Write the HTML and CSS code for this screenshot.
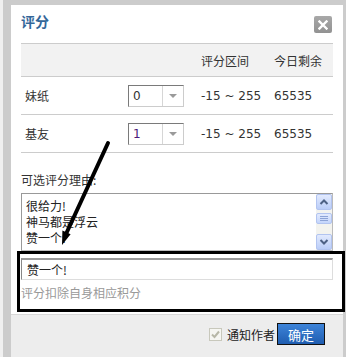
FILE: index.html
```html
<!DOCTYPE html>
<html>
<head>
<meta charset="utf-8">
<link rel="stylesheet" href="styles.css">
</head>
<body>
<div class="dialog">
  <div class="head">
    <h3 class="title">评分</h3>
    <span class="close"><svg width="10" height="10" viewBox="0 0 10 10"><path d="M1.5 1.5L8.5 8.5M8.5 1.5L1.5 8.5" stroke="#fff" stroke-width="2.4" stroke-linecap="square"/></svg></span>
  </div>
  <div class="table">
    <div class="row th"><span></span><span></span><span>评分区间</span><span>今日剩余</span></div>
    <div class="row"><span class="lbl">妹纸</span><span><span class="sel"><span class="val">0</span><span class="arr"><i class="tri"></i></span></span></span><span class="num">-15 ~ 255</span><span class="num">65535</span></div>
    <div class="row"><span class="lbl">基友</span><span><span class="sel"><span class="val v1">1</span><span class="arr"><i class="tri"></i></span></span></span><span class="num">-15 ~ 255</span><span class="num">65535</span></div>
  </div>
  <p class="reason-label">可选评分理由:</p>
  <div class="listbox">
    <ul class="items"><li>很给力!</li><li>神马都是浮云</li><li>赞一个!</li></ul>
    <div class="sb">
      <span class="sbtn"><svg width="10" height="8" viewBox="0 0 10 8"><path d="M1.5 6L5 2.5L8.5 6" fill="none" stroke="#4d6185" stroke-width="2"/></svg></span>
      <span class="thumb"><i></i><i></i><i></i></span>
      <span class="track"></span>
      <span class="sbtn"><svg width="10" height="8" viewBox="0 0 10 8"><path d="M1.5 2L5 5.5L8.5 2" fill="none" stroke="#4d6185" stroke-width="2"/></svg></span>
    </div>
  </div>
  <div class="input">赞一个!</div>
  <p class="hint">评分扣除自身相应积分</p>
  <div class="foot">
    <span class="chk"><svg width="11" height="11" viewBox="0 0 11 11"><path d="M2 5.5L4.5 8L9 2.5" fill="none" stroke="#b8b8a8" stroke-width="2"/></svg></span>
    <span class="notify">通知作者</span>
    <span class="btn">确定</span>
  </div>
</div>
<div class="mark-box"></div>
<svg class="mark-arrow" width="346" height="357" viewBox="0 0 346 357">
  <line x1="108" y1="143" x2="66" y2="234" stroke="#000" stroke-width="4" stroke-linecap="round"/>
  <polygon points="62,245 70.6,234.2 62.4,230.6" fill="#000"/>
</svg>
</body>
</html>
```

FILE: styles.css
```css
body {
  margin: 0;
  background: #f0f0f0;
  overflow: hidden;
  height: 357px;
  position: relative;
  font: 12px "Noto Sans CJK SC", "Liberation Sans", sans-serif;
  color: #333;
}
.dialog {
  margin: -3px 0 0 3px;
  border: 8px solid #ccc;
  width: 332px;
  background: #fff;
}
.head {
  height: 38px;
  padding: 0 11px 0 10px;
  display: flex;
  justify-content: space-between;
  align-items: flex-start;
}
.title {
  margin: 0;
  padding-top: 8px;
  font-size: 14px;
  line-height: 16px;
  font-weight: bold;
  color: #369;
}
.close {
  margin-top: 11px;
  width: 18px;
  height: 17px;
  border-radius: 2px;
  background: linear-gradient(#a8a8a8, #929292);
  display: flex;
  align-items: center;
  justify-content: center;
}
.table {
  margin: 0 10px;
}
.row {
  display: grid;
  grid-template-columns: 107px 73px 73px 1fr;
  align-items: center;
  height: 37px;
  border-bottom: 1px solid #ccc;
}
.row.th {
  height: 32px;
  border-top: 1px solid #ccc;
  background: #f2f2f2;
}
.lbl {
  padding-left: 4px;
}
.num {
  font-family: "DejaVu Sans", "Liberation Sans", sans-serif;
  font-size: 12px;
}
.sel {
  display: flex;
  width: 56px;
  height: 22px;
  box-sizing: border-box;
  border: 1px solid;
  border-color: #7a7a7a #ccc #ccc #7a7a7a;
}
.val {
  width: 33px;
  padding-left: 4px;
  box-sizing: border-box;
  line-height: 20px;
  font-family: "DejaVu Sans", sans-serif;
}
.val.v1 {
  color: #4b1a7a;
}
.arr {
  flex: 1;
  border-left: 1px solid #d6d6d6;
  display: flex;
  align-items: center;
  justify-content: center;
}
.tri {
  width: 0;
  height: 0;
  border-left: 4px solid transparent;
  border-right: 4px solid transparent;
  border-top: 4px solid #9a9a9a;
}
.reason-label {
  margin: 19px 10px 0;
  line-height: 16px;
}
.listbox {
  margin: 5px 10px 0;
  height: 58px;
  box-sizing: border-box;
  border: 1px solid #999;
  border-right-color: #bbb;
  border-bottom-color: #bbb;
  display: flex;
}
.items {
  list-style: none;
  margin: 0;
  padding: 4px 0 0 4px;
  flex: 1;
  line-height: 16px;
  color: #222;
}
.sb {
  width: 16px;
  display: flex;
  flex-direction: column;
  background: #f3f3ef;
}
.sbtn {
  height: 16px;
  box-sizing: border-box;
  border: 1px solid #b2c4f0;
  border-radius: 2px;
  background: linear-gradient(#e2eafe, #bacdf8);
  display: flex;
  align-items: center;
  justify-content: center;
}
.thumb {
  margin-top: 3px;
  height: 11px;
  box-sizing: border-box;
  border: 1px solid #b2c4f0;
  border-radius: 2px;
  background: linear-gradient(#e2eafe, #c4d5fb);
  display: flex;
  flex-direction: column;
  align-items: center;
  justify-content: center;
  gap: 1px;
}
.thumb i {
  width: 8px;
  height: 1px;
  background: #8da3d6;
}
.track {
  flex: 1;
}
.input {
  margin: 7px 10px 0;
  height: 22px;
  box-sizing: border-box;
  border: 1px solid;
  border-color: #999 #ddd #ddd #888;
  border-top-width: 2px;
  padding-left: 5px;
  line-height: 19px;
  color: #222;
}
.hint {
  margin: 5px 10px 0;
  line-height: 16px;
  color: #999;
}
.foot {
  margin-top: 13px;
  border-top: 1px solid #d8d8d8;
  background: #ededed;
  padding: 8px 18px 20px 0;
  display: flex;
  justify-content: flex-end;
  align-items: center;
}
.chk {
  width: 13px;
  height: 13px;
  box-sizing: border-box;
  border: 1px solid #c8c8bc;
  background: #f6f6f2;
  display: flex;
  align-items: center;
  justify-content: center;
  margin-right: 5px;
}
.notify {
  margin-right: 2px;
  color: #222;
}
.btn {
  width: 48px;
  height: 22px;
  box-sizing: border-box;
  border: 1px solid #111;
  background: linear-gradient(#3d84d9, #1f5db0);
  color: #fff;
  font-size: 13px;
  display: flex;
  align-items: center;
  justify-content: center;
}
.mark-box {
  position: absolute;
  left: 17px;
  top: 251px;
  width: 328px;
  height: 61px;
  box-sizing: border-box;
  border: 3px solid #000;
}
.mark-arrow {
  position: absolute;
  left: 0;
  top: 0;
  pointer-events: none;
}
```
